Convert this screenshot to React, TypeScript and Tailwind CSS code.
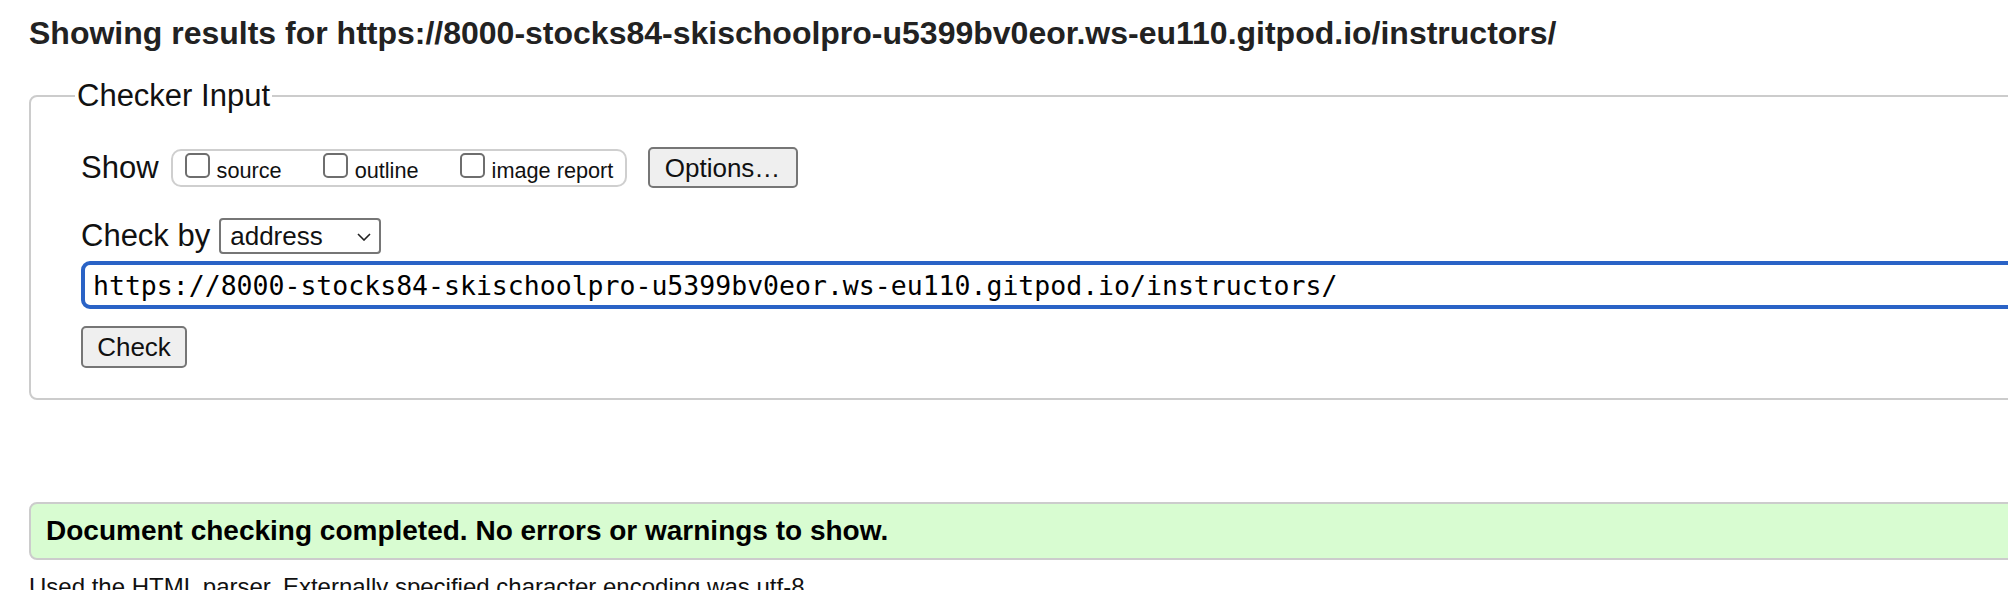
import { ChangeEvent, useState } from 'react';

const url = 'https://8000-stocks84-skischoolpro-u5399bv0eor.ws-eu110.gitpod.io/instructors/';

const showOptions = ['source', 'outline', 'image report'];

export default function App() {
  const [address, setAddress] = useState(url);

  return (
    <div className="h-[590px] w-[2008px] overflow-hidden bg-white font-['Liberation_Sans',Arial,sans-serif] text-[#111]">
      <div className="w-[2300px] pl-[29px]">
        <h2 className="pt-[15px] text-[32px] leading-[37px] font-bold text-[#222]">
          Showing results for {url}
        </h2>

        {/* Checker input */}
        <fieldset className="mt-[26px] rounded-[8px] border-2 border-[#cccccc]">
          <legend className="ml-[44px] px-[2px] text-[31px] leading-[36px]">Checker Input</legend>
          <div className="pl-[50px] pt-[33px] pb-[30px]">
            <div className="flex h-[41px] items-center">
              <span className="text-[31px] leading-[36px]">Show</span>
              <div className="ml-[12px] flex h-[38px] w-[456px] items-center rounded-[10px] border-2 border-[#cfcfcf] pl-[12px]">
                {showOptions.map((opt, i) => (
                  <label key={opt} className={`flex items-baseline ${i > 0 ? 'ml-[41px]' : ''}`}>
                    <input
                      type="checkbox"
                      className="h-[25px] w-[25px] appearance-none rounded-[5px] border-2 border-[#6e6e6e] bg-white"
                    />
                    <span className="ml-[7px] text-[21.7px] leading-[25px]">{opt}</span>
                  </label>
                ))}
              </div>
              <button className="ml-[21px] h-[41px] w-[150px] rounded-[5px] border-2 border-[#767676] bg-[#efefef] text-[26px] leading-[30px]">
                Options…
              </button>
            </div>

            <div className="mt-[30px] flex h-[36px] items-center">
              <span className="text-[31px] leading-[36px]">Check by</span>
              <div className="ml-[9px] flex h-[36px] w-[162px] items-center justify-between rounded-[4px] border-2 border-[#767676] bg-white pl-[9px] pr-[8px]">
                <span className="text-[26px] leading-[30px]">address</span>
                <svg width="14" height="8" viewBox="0 0 14 8" className="mt-[2px]">
                  <polyline points="1,1 7,7 13,1" fill="none" stroke="#222" strokeWidth="1.6" />
                </svg>
              </div>
            </div>

            <input
              type="text"
              value={address}
              onChange={(e: ChangeEvent<HTMLInputElement>) => setAddress(e.target.value)}
              className="mt-[7px] block h-[48px] w-[2300px] rounded-[9px] border-4 border-[#2a63c6] pl-[8px] font-['DejaVu_Sans_Mono',monospace] text-[26.5px] text-black outline-none"
            />

            <button className="mt-[17px] block h-[42px] w-[106px] rounded-[5px] border-2 border-[#767676] bg-[#efefef] text-[26px] leading-[30px]">
              Check
            </button>
          </div>
        </fieldset>

        {/* Result */}
        <div className="mt-[102px] flex h-[58px] items-center rounded-[8px] border-2 border-[#cccccc] bg-[#d8fcd1] pl-[15px]">
          <p className="text-[28px] leading-[32px] font-bold text-black">
            Document checking completed. No errors or warnings to show.
          </p>
        </div>

        <p className="mt-[13px] text-[24px] leading-[28px]">
          Used the HTML parser. Externally specified character encoding was utf-8.
        </p>
      </div>
    </div>
  );
}
